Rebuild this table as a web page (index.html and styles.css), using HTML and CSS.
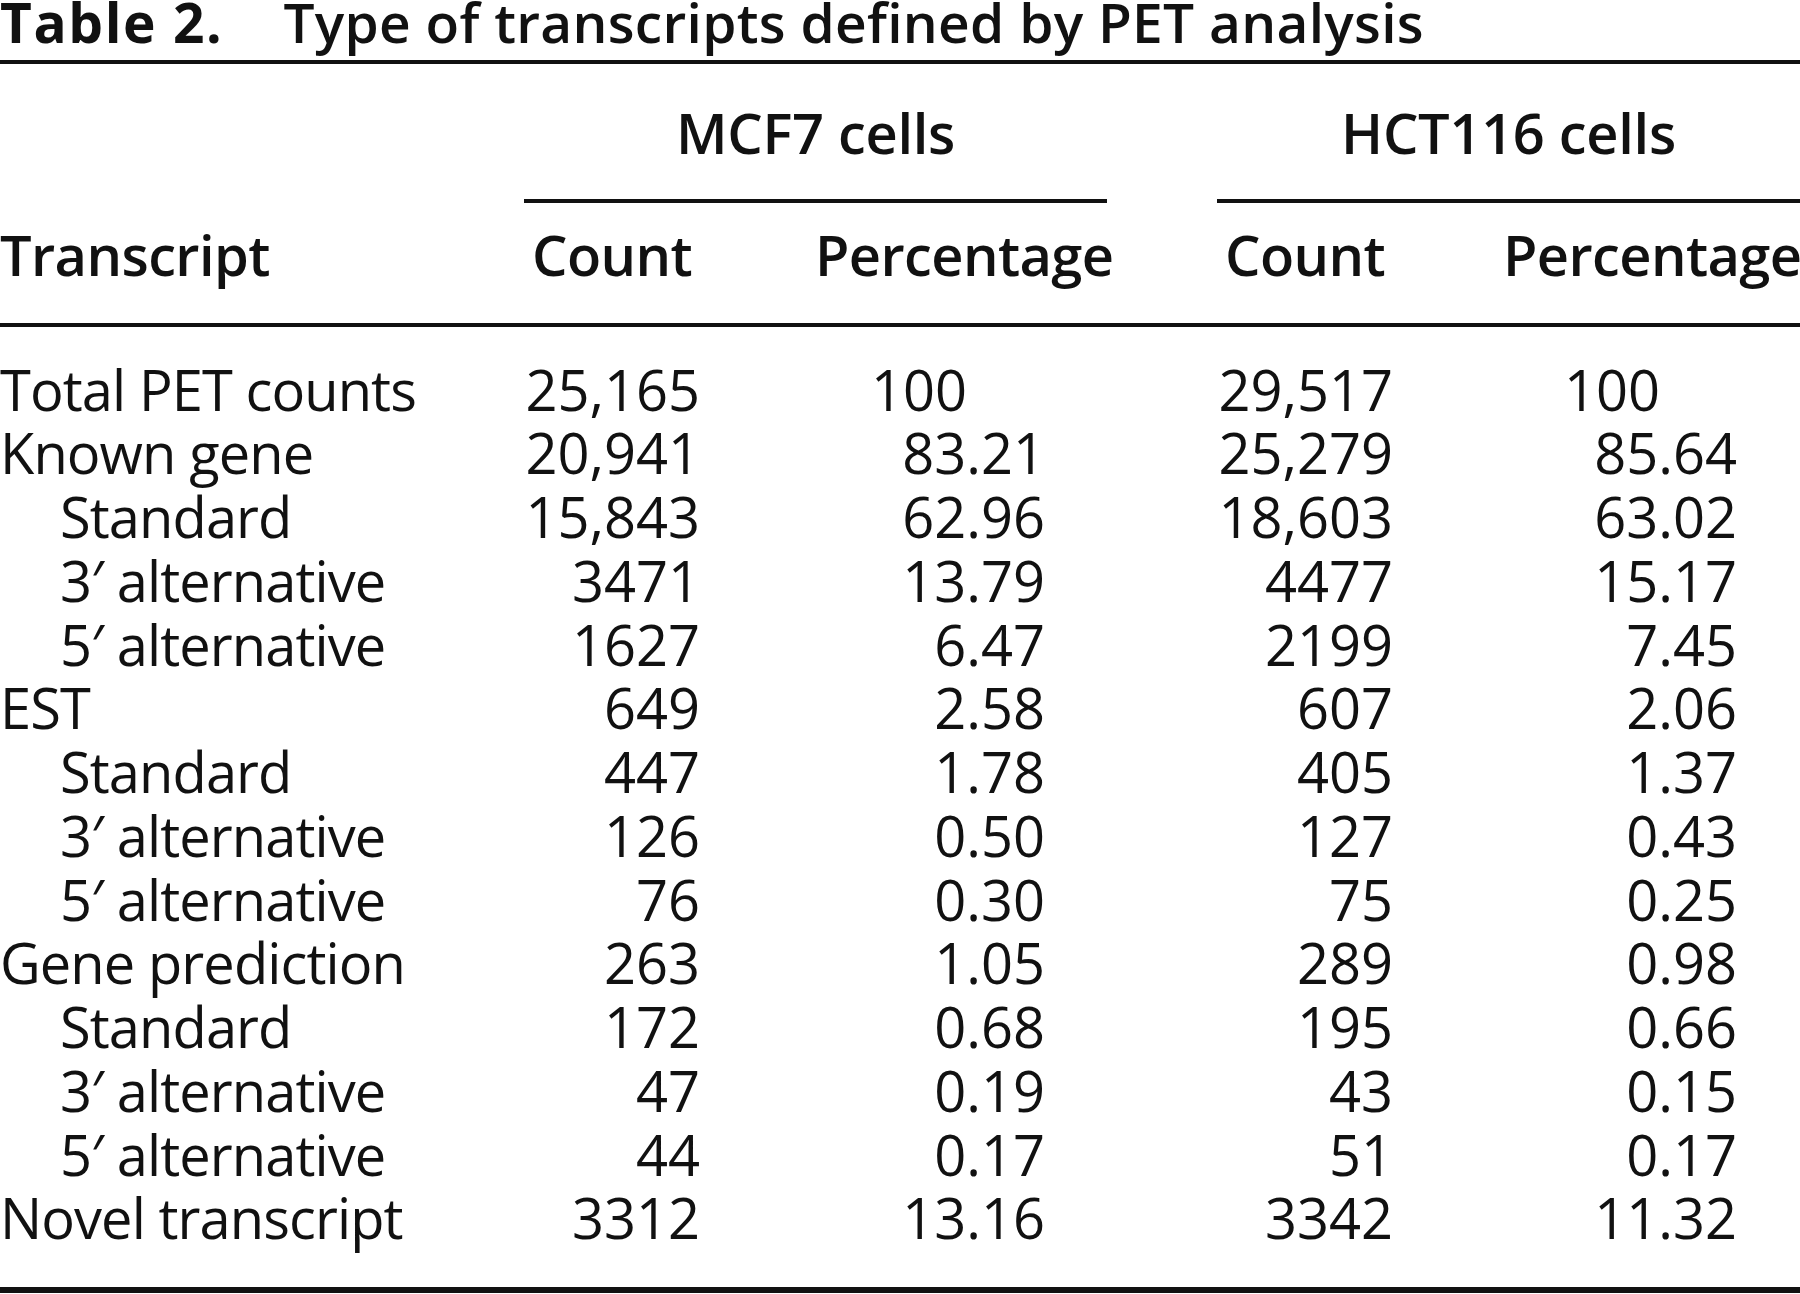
FILE: index.html
```html
<!DOCTYPE html>
<html lang="en">
<head>
<meta charset="utf-8">
<title>Table 2. Type of transcripts defined by PET analysis</title>
<link rel="stylesheet" href="styles.css">
</head>
<body>
<div class="table">
  <div class="caption"><span class="label">Table 2.</span><span class="title">Type of transcripts defined by PET analysis</span></div>
  <div class="row top">
    <div class="cell stub"></div>
    <div class="cell spanner mcf">MCF7 cells</div>
    <div class="cell spanner hct">HCT116 cells</div>
  </div>
  <div class="row heads">
    <div class="cell stub">Transcript</div>
    <div class="cell hcnt">Count</div>
    <div class="cell hpct">Percentage</div>
    <div class="cell gap"></div>
    <div class="cell hcnt">Count</div>
    <div class="cell hpct hpct2">Percentage</div>
  </div>
  <div class="body">
    <div class="row"><div class="cell stub">Total PET counts</div><div class="cell num">25,165</div><div class="cell pct int">100</div><div class="cell gap"></div><div class="cell num">29,517</div><div class="cell pct pct2 int">100</div></div>
    <div class="row"><div class="cell stub">Known gene</div><div class="cell num">20,941</div><div class="cell pct">83.21</div><div class="cell gap"></div><div class="cell num">25,279</div><div class="cell pct pct2">85.64</div></div>
    <div class="row"><div class="cell stub sub">Standard</div><div class="cell num">15,843</div><div class="cell pct">62.96</div><div class="cell gap"></div><div class="cell num">18,603</div><div class="cell pct pct2">63.02</div></div>
    <div class="row"><div class="cell stub sub">3′ alternative</div><div class="cell num">3471</div><div class="cell pct">13.79</div><div class="cell gap"></div><div class="cell num">4477</div><div class="cell pct pct2">15.17</div></div>
    <div class="row"><div class="cell stub sub">5′ alternative</div><div class="cell num">1627</div><div class="cell pct">6.47</div><div class="cell gap"></div><div class="cell num">2199</div><div class="cell pct pct2">7.45</div></div>
    <div class="row"><div class="cell stub">EST</div><div class="cell num">649</div><div class="cell pct">2.58</div><div class="cell gap"></div><div class="cell num">607</div><div class="cell pct pct2">2.06</div></div>
    <div class="row"><div class="cell stub sub">Standard</div><div class="cell num">447</div><div class="cell pct">1.78</div><div class="cell gap"></div><div class="cell num">405</div><div class="cell pct pct2">1.37</div></div>
    <div class="row"><div class="cell stub sub">3′ alternative</div><div class="cell num">126</div><div class="cell pct">0.50</div><div class="cell gap"></div><div class="cell num">127</div><div class="cell pct pct2">0.43</div></div>
    <div class="row"><div class="cell stub sub">5′ alternative</div><div class="cell num">76</div><div class="cell pct">0.30</div><div class="cell gap"></div><div class="cell num">75</div><div class="cell pct pct2">0.25</div></div>
    <div class="row"><div class="cell stub">Gene prediction</div><div class="cell num">263</div><div class="cell pct">1.05</div><div class="cell gap"></div><div class="cell num">289</div><div class="cell pct pct2">0.98</div></div>
    <div class="row"><div class="cell stub sub">Standard</div><div class="cell num">172</div><div class="cell pct">0.68</div><div class="cell gap"></div><div class="cell num">195</div><div class="cell pct pct2">0.66</div></div>
    <div class="row"><div class="cell stub sub">3′ alternative</div><div class="cell num">47</div><div class="cell pct">0.19</div><div class="cell gap"></div><div class="cell num">43</div><div class="cell pct pct2">0.15</div></div>
    <div class="row"><div class="cell stub sub">5′ alternative</div><div class="cell num">44</div><div class="cell pct">0.17</div><div class="cell gap"></div><div class="cell num">51</div><div class="cell pct pct2">0.17</div></div>
    <div class="row"><div class="cell stub">Novel transcript</div><div class="cell num">3312</div><div class="cell pct">13.16</div><div class="cell gap"></div><div class="cell num">3342</div><div class="cell pct pct2">11.32</div></div>
  </div>
</div>
</body>
</html>
```

FILE: styles.css
```css
html, body {
  margin: 0;
  padding: 0;
  background: #ffffff;
}

body {
  width: 1800px;
  height: 1294px;
  overflow: hidden;
  color: #111111;
  font-family: "Open Sans", "Noto Sans", sans-serif;
}

.table {
  width: 1800px;
}

.caption {
  height: 44px;
  line-height: 44px;
  font-size: 55px;
  padding-bottom: 16px;
  border-bottom: 4px solid #111111;
  white-space: nowrap;
}

.label {
  font-weight: 700;
  letter-spacing: 1.6px;
  margin-right: 60px;
}

.title {
  font-weight: 600;
  letter-spacing: 0.3px;
}

.row {
  display: grid;
  grid-template-columns: 524px 176px 407px 110px 176px 407px;
  font-size: 56px;
  line-height: 63.75px;
  white-space: nowrap;
}

.stub {
  letter-spacing: -0.9px;
}

.top {
  padding-top: 37px;
  font-weight: 600;
}

.top .spanner {
  text-align: center;
  letter-spacing: -0.3px;
  padding-bottom: 34px;
  border-bottom: 4px solid #111111;
}

.top .mcf {
  grid-column: 2 / 4;
}

.top .hct {
  grid-column: 5 / 7;
}

.heads {
  padding-top: 20px;
  padding-bottom: 36px;
  border-bottom: 4px solid #111111;
  font-weight: 600;
}

.heads .cell {
  letter-spacing: -0.6px;
}

.hcnt {
  text-align: center;
}

.hpct {
  text-align: center;
  padding-left: 115px;
}

.hpct2 {
  padding-left: 110px;
}

.body {
  padding-top: 31px;
  padding-bottom: 37px;
  border-bottom: 6px solid #111111;
}

.sub {
  padding-left: 60px;
}

.num {
  text-align: right;
}

.pct {
  text-align: right;
  padding-right: 62px;
}

.pct2 {
  padding-right: 63px;
}

.pct.int {
  padding-right: 140px;
}

.pct2.int {
  padding-right: 140px;
}
```
